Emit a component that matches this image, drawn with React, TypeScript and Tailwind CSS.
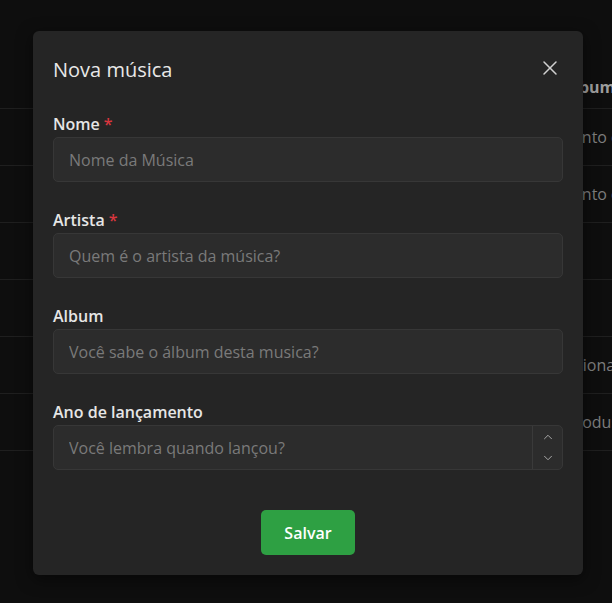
import { X, ChevronUp, ChevronDown } from "lucide-react";

const rows = [
  { text: "Momento de amor", indent: "pl-[534px]" },
  { text: "Momento de paz", indent: "pl-[534px]" },
  { text: "", indent: "" },
  { text: "", indent: "" },
  { text: "Tradicional", indent: "pl-[537px]" },
  { text: "Produsão", indent: "pl-[566px]" },
];

function Field({
  label,
  placeholder,
  required,
  number,
}: {
  label: string;
  placeholder: string;
  required?: boolean;
  number?: boolean;
}) {
  return (
    <div className="flex flex-col">
      <label className="h-6 text-base font-semibold leading-6 text-[#e6e6e6]">
        {label}
        {required && <span className="ml-1 text-[#d9363e]">*</span>}
      </label>
      <div className="mt-px flex h-[45px] items-stretch rounded-[5px] border border-[#373737] bg-[#2c2c2c]">
        <input
          type="text"
          placeholder={placeholder}
          className="min-w-0 flex-1 bg-transparent px-[15px] text-base text-[#ddd] outline-none placeholder:text-[#7a7a7a]"
        />
        {number && (
          <div className="flex w-[30px] flex-col items-center justify-center gap-[7px] border-l border-[#3a3a3a] text-[#a8a8a8]">
            <ChevronUp size={14} strokeWidth={1.7} />
            <ChevronDown size={14} strokeWidth={1.7} />
          </div>
        )}
      </div>
    </div>
  );
}

export default function App() {
  return (
    <div
      className="relative h-[603px] w-[612px] overflow-hidden bg-[#0e0e0e]"
      style={{ fontFamily: '"Open Sans", "Noto Sans", sans-serif' }}
    >
      {/* table behind the modal */}
      <div className="flex flex-col pt-[66px]">
        <div className="flex h-[42px] items-center pl-[563px] text-base font-bold text-[#9d9d9d]">
          Álbum
        </div>
        {rows.map((r, i) => (
          <div
            key={i}
            className={`flex h-[57px] items-center whitespace-nowrap border-t border-[#1f1f1f] text-base text-[#7d7d7d] ${r.indent}`}
          >
            {r.text}
          </div>
        ))}
        <div className="border-t border-[#1f1f1f]" />
      </div>

      {/* modal */}
      <div className="absolute left-[33px] top-[31px] flex w-[550px] flex-col rounded-md bg-[#252525] px-5 pb-5 pt-[25px] shadow-[0_4px_16px_rgba(0,0,0,0.5)]">
        <div className="flex h-7 items-center justify-between">
          <h2 className="text-xl font-normal text-[#e8e8e8]">Nova música</h2>
          <button className="-mt-1 mr-[1px] text-[#d0d0d0]">
            <X size={24} strokeWidth={1.5} />
          </button>
        </div>

        <form className="mt-7 flex flex-col gap-[26px]">
          <Field label="Nome" placeholder="Nome da Música" required />
          <Field label="Artista" placeholder="Quem é o artista da música?" required />
          <Field label="Album" placeholder="Você sabe o álbum desta musica?" />
          <Field label="Ano de lançamento" placeholder="Você lembra quando lançou?" number />
        </form>

        <div className="mt-10 flex justify-center">
          <button className="h-[45px] w-[94px] rounded-[5px] bg-[#2ea043] text-base font-semibold text-white">
            Salvar
          </button>
        </div>
      </div>
    </div>
  );
}
